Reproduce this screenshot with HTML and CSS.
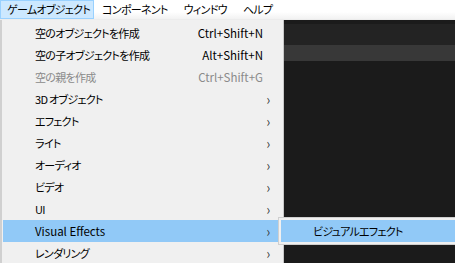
FILE: index.html
```html
<!DOCTYPE html>
<html lang="ja">
<head>
<meta charset="utf-8">
<link rel="stylesheet" href="styles.css">
</head>
<body>
<div class="menubar">
  <div class="top active">ゲームオブジェクト</div>
  <div class="top">コンポーネント</div>
  <div class="top">ウィンドウ</div>
  <div class="top">ヘルプ</div>
</div>
<div class="main">
  <div class="menu">
    <div class="item"><span class="label">空のオブジェクトを作成</span><span class="key">Ctrl+Shift+N</span></div>
    <div class="item"><span class="label">空の子オブジェクトを作成</span><span class="key">Alt+Shift+N</span></div>
    <div class="item disabled"><span class="label">空の親を作成</span><span class="key">Ctrl+Shift+G</span></div>
    <div class="item"><span class="label">3D&nbsp;オブジェクト</span><span class="arrow">›</span></div>
    <div class="item"><span class="label">エフェクト</span><span class="arrow">›</span></div>
    <div class="item"><span class="label">ライト</span><span class="arrow">›</span></div>
    <div class="item"><span class="label">オーディオ</span><span class="arrow">›</span></div>
    <div class="item"><span class="label">ビデオ</span><span class="arrow">›</span></div>
    <div class="item"><span class="label">UI</span><span class="arrow">›</span></div>
    <div class="item hot"><span class="label latin">Visual Effects</span><span class="arrow">›</span>
      <div class="submenu"><div class="subitem">ビジュアルエフェクト</div></div>
    </div>
    <div class="item"><span class="label">レンダリング</span><span class="arrow">›</span></div>
  </div>
  <div class="dark">
    <div class="band1"></div>
    <div class="band2"></div>
  </div>
</div>
</body>
</html>
```

FILE: styles.css
```css
html, body {
  margin: 0;
  padding: 0;
  width: 455px;
  height: 263px;
  overflow: hidden;
  background: #1b1b1b;
  font-family: "Noto Sans CJK JP", "Noto Sans", sans-serif;
  font-feature-settings: "palt";
  font-size: 11.5px;
  color: #000;
}
.menubar {
  height: 20px;
  display: flex;
  background: linear-gradient(#ffffff 0, #ffffff 12px, #f2f2f2 19px, #e6e6e6 20px);
}
.top {
  padding: 0 7px;
  height: 19px;
  line-height: 17px;
  box-sizing: border-box;
  border: 1px solid transparent;
  white-space: nowrap;
  font-size: 11px;
  letter-spacing: -0.7px;
}
.top.active {
  background: #cce8ff;
  border-color: #99d1ff;
  padding-left: 6px;
  padding-right: 3px;
}
.main {
  display: flex;
  height: 243px;
}
.menu {
  width: 284px;
  flex: none;
  background: #f0f0f0;
  border-left: 2px solid #d0d0d0;
  border-right: 1px solid #c8c8c8;
  box-sizing: border-box;
  padding: 2px 2px 0 1px;
}
.item {
  position: relative;
  height: 22px;
  line-height: 22px;
  display: flex;
  align-items: center;
  padding-left: 32px;
  white-space: nowrap;
}
.label { flex: 1; font-size: 11px; letter-spacing: -0.7px; }
.label.latin { font-size: 11.5px; letter-spacing: 0; }
.key {
  padding-right: 18px;
}
.disabled, .disabled .key { color: #8a8a8a; }
.arrow {
  width: 16px;
  font-size: 15px;
  color: #333;
  transform: scaleX(0.8);
}
.hot { background: #91c9f7; }
.submenu {
  position: absolute;
  left: 275px;
  top: -3px;
  width: 180px;
  height: 28px;
  box-sizing: border-box;
  background: #f0f0f0;
  border: 1px solid #cfcfcf;
  padding: 2px;
}
.subitem {
  background: #91c9f7;
  height: 22px;
  line-height: 22px;
  padding-left: 32px;
  font-size: 11px;
  letter-spacing: -0.7px;
}
.dark {
  flex: 1;
  background: #1b1b1b;
  padding-top: 4px;
}
.band1 {
  height: 21px;
  background: #232323;
}
.band2 {
  height: 16px;
  background: #383838;
}
```
